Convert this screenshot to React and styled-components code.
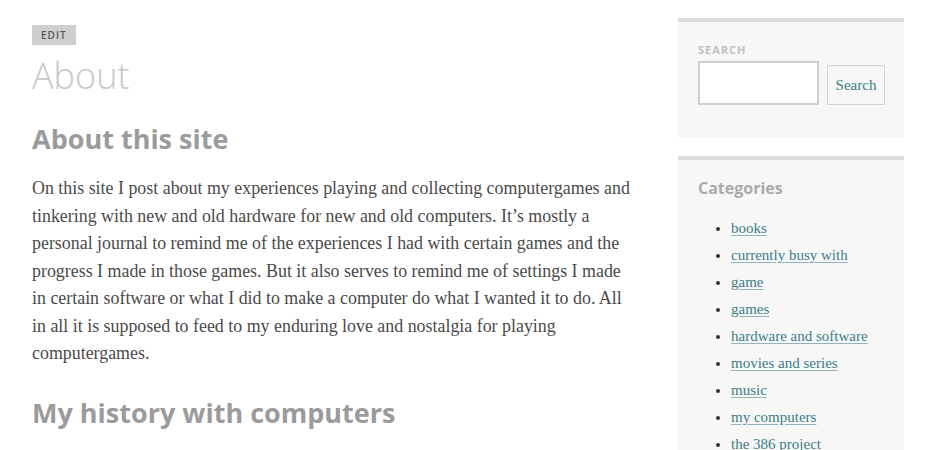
import styled, { createGlobalStyle } from "styled-components";

const GlobalStyle = createGlobalStyle`
  body {
    margin: 0;
    background: #fff;
  }
`;

const categories = [
  "books",
  "currently busy with",
  "game",
  "games",
  "hardware and software",
  "movies and series",
  "music",
  "my computers",
  "the 386 project",
];

function App() {
  return (
    <Page>
      <GlobalStyle />
      <Main>
        <EditButton>Edit</EditButton>
        <PageTitle>About</PageTitle>
        <Heading>About this site</Heading>
        <Paragraph>
          On this site I post about my experiences playing and collecting computergames and
          tinkering with new and old hardware for new and old computers. It’s mostly a
          personal journal to remind me of the experiences I had with certain games and the
          progress I made in those games. But it also serves to remind me of settings I made
          in certain software or what I did to make a computer do what I wanted it to do. All
          in all it is supposed to feed to my enduring love and nostalgia for playing
          computergames.
        </Paragraph>
        <Heading>My history with computers</Heading>
      </Main>
      <Sidebar>
        <Widget $pad="20px 19px 32px 20px">
          <SearchForm>
            <Label>Search</Label>
            <SearchRow>
              <SearchInput type="text" />
              <SearchButton>Search</SearchButton>
            </SearchRow>
          </SearchForm>
        </Widget>
        <Widget $pad="16px 19px 19px 20px">
          <WidgetTitle>Categories</WidgetTitle>
          <CategoryList>
            {categories.map((c) => (
              <li key={c}>
                <CategoryLink href="#">{c}</CategoryLink>
              </li>
            ))}
          </CategoryList>
        </Widget>
      </Sidebar>
    </Page>
  );
}

export default App;

const Page = styled.div`
  display: flex;
  align-items: flex-start;
  gap: 43px;
  padding: 18px 0 0 32px;
  height: 450px;
  box-sizing: border-box;
  overflow: hidden;
`;

const Main = styled.div`
  width: 603px;
  padding-top: 7px;
`;

const EditButton = styled.span`
  display: inline-block;
  background: #cfcfcf;
  color: #555;
  font-family: "Open Sans", sans-serif;
  font-size: 10px;
  font-weight: 600;
  letter-spacing: 1px;
  text-transform: uppercase;
  line-height: 20px;
  padding: 0 9px;
`;

const PageTitle = styled.h1`
  margin: 8px 0 0;
  font-family: "Open Sans", sans-serif;
  font-weight: 300;
  font-size: 36px;
  line-height: 46px;
  color: #c8c8c8;
`;

const Heading = styled.h2`
  margin: 22px 0 18px;
  font-family: "Open Sans", sans-serif;
  font-weight: 700;
  font-size: 27px;
  line-height: 36px;
  color: #9b9b9b;

  p + & {
    margin-top: 27px;
  }
`;

const Paragraph = styled.p`
  margin: 0;
  font-family: "Liberation Serif", serif;
  font-size: 17.9px;
  line-height: 27.5px;
  color: #4a4a4a;
`;

const Sidebar = styled.aside`
  width: 226px;
  display: flex;
  flex-direction: column;
  gap: 19px;
`;

const Widget = styled.section`
  background: #f7f7f7;
  border-top: 4px solid #dcdcdc;
  padding: ${(p) => p.$pad};
`;

const SearchForm = styled.form`
  margin: 0;
`;

const Label = styled.div`
  font-family: "Open Sans", sans-serif;
  font-size: 11px;
  font-weight: 700;
  letter-spacing: 1px;
  text-transform: uppercase;
  color: #c0c0c0;
  line-height: 15px;
`;

const SearchRow = styled.div`
  display: flex;
  align-items: flex-end;
  gap: 8px;
  margin-top: 4px;
`;

const SearchInput = styled.input`
  width: 121px;
  height: 44px;
  box-sizing: border-box;
  border: 2px solid #cfcfcf;
  background: #fff;
  margin: 0;
  padding: 0 6px;
`;

const SearchButton = styled.button`
  width: 60px;
  height: 40px;
  box-sizing: border-box;
  border: 1px solid #d4d4d4;
  background: #f7f7f7;
  color: #3b7d86;
  font-family: "Liberation Serif", serif;
  font-size: 15px;
  padding: 0;
  margin: 0;
`;

const WidgetTitle = styled.h3`
  margin: 0;
  font-family: "Open Sans", sans-serif;
  font-size: 16px;
  font-weight: 700;
  line-height: 24px;
  color: #ababab;
`;

const CategoryList = styled.ul`
  margin: 15px 0 0;
  padding: 0 0 0 33px;
  font-family: "Liberation Serif", serif;
  font-size: 15px;
  line-height: 27px;
  color: #333;
`;

const CategoryLink = styled.a`
  color: #3b7d86;
  text-decoration: underline;
  text-decoration-color: #8fb5ba;
  text-underline-offset: 2px;
`;
